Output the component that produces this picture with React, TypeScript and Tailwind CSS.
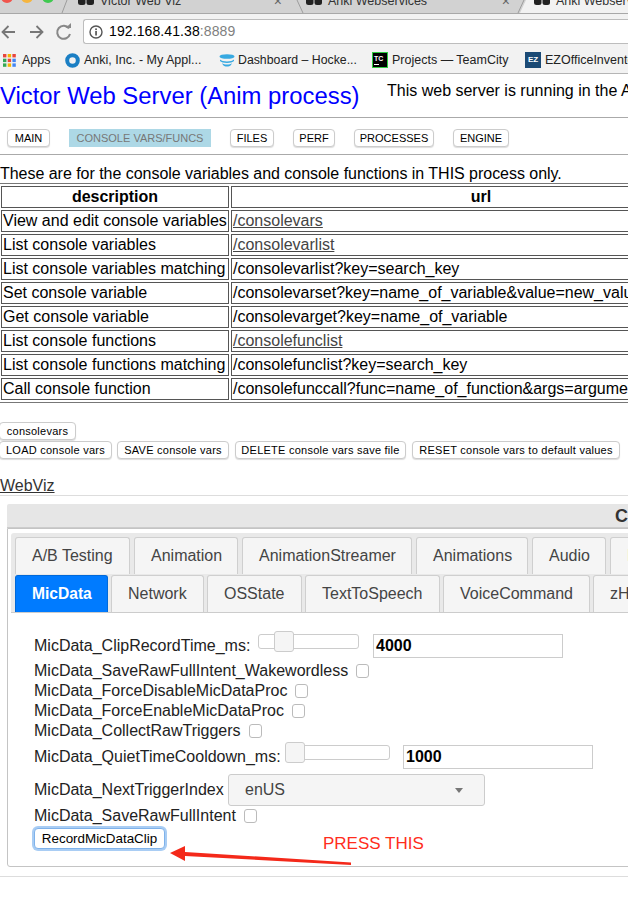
import React from "react";

const sans = "font-['Liberation_Sans',Arial,sans-serif]";

function Tab({ label, w, active }: { label: string; w: number; active?: boolean }) {
  return (
    <div
      style={{ width: w }}
      className={
        "h-[37px] shrink-0 flex items-center justify-start pl-[16px] rounded-t-[3px] border border-b-0 " +
        (active ? "bg-[#007bff] border-[#0069d9] text-white font-bold text-[15.6px]" : "bg-[#f5f5f5] border-[#cfcfcf] text-[#444] text-[16px]")
      }
    >
      {label}
    </div>
  );
}

function NavBtn({ label, w, active }: { label: string; w: number; active?: boolean }) {
  return (
    <div
      style={{ width: w }}
      className={
        "h-[18px] shrink-0 flex items-center justify-center text-[11px] " +
        (active ? "bg-[#add8e6] text-[#777]" : "bg-white text-black rounded-[4px] border border-[#ccc] shadow-[0_1px_1px_#ddd]")
      }
    >
      {label}
    </div>
  );
}

function GrayBtn({ label, w }: { label: string; w: number }) {
  return (
    <div
      style={{ width: w }}
      className="h-[18px] shrink-0 flex items-center justify-center text-[11px] tracking-[0.25px] text-black bg-white rounded-[4px] border border-[#ccc] shadow-[0_1px_1px_#ddd]"
    >
      {label}
    </div>
  );
}

function Check() {
  return <div className="ml-[8px] w-[13px] h-[14px] rounded-[3px] border border-[#bbb] bg-white shrink-0" />;
}

function Slider({ thumb, w }: { thumb: number; w: number }) {
  return (
    <div style={{ width: w }} className="relative h-[15px] rounded-[3px] border border-[#ccc] bg-white shrink-0">
      <div
        style={{ left: thumb }}
        className="absolute top-[-4px] w-[20px] h-[21px] rounded-[3px] border border-[#ccc] bg-[#f5f5f5]"
      />
    </div>
  );
}

function Fav() {
  return (
    <svg width="16" height="10" viewBox="0 0 16 10" className="shrink-0">
      <rect x="0" y="0" width="7.5" height="8" rx="2.5" fill="#222" />
      <rect x="8.5" y="0" width="7.5" height="8" rx="2.5" fill="#222" />
    </svg>
  );
}

function BrowserTab({ w, label, close }: { w: number; label: string; close?: boolean }) {
  return (
    <div style={{ width: w }} className="h-[13px] shrink-0 flex items-center pl-[16px] pr-[8px] overflow-hidden">
      <div className="flex items-center h-[13px] mt-[-10px] w-full">
        <Fav />
        <span className="ml-[6px] text-[12.5px] leading-[13px] text-[#333] whitespace-nowrap">{label}</span>
        {close && <span className="ml-auto text-[14px] leading-[13px] text-[#666]">×</span>}
      </div>
    </div>
  );
}

export default function App() {
  const rows: [string, string, boolean][] = [
    ["View and edit console variables", "/consolevars", true],
    ["List console variables", "/consolevarlist", true],
    ["List console variables matching", "/consolevarlist?key=search_key", false],
    ["Set console variable", "/consolevarset?key=name_of_variable&value=new_value", false],
    ["Get console variable", "/consolevarget?key=name_of_variable", false],
    ["List console functions", "/consolefunclist", true],
    ["List console functions matching", "/consolefunclist?key=search_key", false],
    ["Call console function", "/consolefunccall?func=name_of_function&args=arguments", false],
  ];
  return (
    <div className={"relative w-[628px] h-[904px] overflow-hidden bg-white text-black " + sans}>
      {/* tab strip */}
      <div className="relative h-[14px] bg-[#d2d2d2] border-b border-[#a8a8a8] overflow-hidden">
        <svg width="628" height="14" viewBox="0 0 628 14" className="absolute left-0 top-0">
          <circle cx="7" cy="-3" r="6" fill="#f0554d" />
          <circle cx="27" cy="-3" r="6" fill="#f5b53f" />
          <circle cx="48" cy="-3" r="6" fill="#3fc950" />
          <path d="M520 13 L526 0 L628 0 L628 14 L518 14 Z" fill="#f2f2f2" />
          <path d="M62 13 L67 0 M297 0 L303 13 M518 13 L524 0" stroke="#9c9c9c" strokeWidth="1" fill="none" />
        </svg>
        <div className="relative flex pl-[62px]">
          <BrowserTab w={228} label="Victor Web Viz" close />
          <BrowserTab w={228} label="Anki Webservices" close />
          <BrowserTab w={120} label="Anki Webserver" />
        </div>
      </div>
      {/* toolbar */}
      <div className="h-[33px] bg-[#f2f2f2] flex items-center">
        <svg width="78" height="20" viewBox="0 0 78 20" className="ml-[1px] shrink-0 mt-[2px]">
          <g stroke="#777" strokeWidth="1.8" fill="none">
            <path d="M14 10 H2 M7.5 4 L1.5 10 L7.5 16" />
            <path d="M29 10 H41 M35.5 4 L41.5 10 L35.5 16" />
            <path d="M68 6.5 A6.5 6.5 0 1 0 69 12" stroke="#888" strokeWidth="2" />
            <path d="M64.5 6 H70 V1 Z" fill="#888" stroke="none" />
          </g>
        </svg>
        <div className="ml-[4px] mt-[2px] h-[25px] flex-1 bg-white rounded-l-[3px] border border-[#bdbdbd] border-r-0 flex items-center pl-[5px]">
          <svg width="14" height="14" viewBox="0 0 14 14" className="shrink-0">
            <circle cx="7" cy="7" r="6" stroke="#555" strokeWidth="1.4" fill="none" />
            <rect x="6.2" y="6" width="1.7" height="4.5" fill="#555" />
            <rect x="6.2" y="3.4" width="1.7" height="1.7" fill="#555" />
          </svg>
          <span className="ml-[6px] text-[14px] tracking-[0.1px]">192.168.41.38<span className="text-[#808080]">:8889</span></span>
        </div>
      </div>
      {/* bookmarks */}
      <div className="h-[27px] bg-[#f2f2f2] border-b border-[#b5b5b5] flex items-center text-[12.5px] text-[#222] whitespace-nowrap overflow-hidden">
        <svg width="13" height="13" viewBox="0 0 13 13" className="ml-[3px] shrink-0">
          {[0, 1, 2].map((r) =>
            [0, 1, 2].map((c) => (
              <rect
                key={r + "-" + c}
                x={c * 4.7}
                y={r * 4.7}
                width="3.4"
                height="3.4"
                fill={["#e8453c", "#f4b400", "#e8453c", "#34a853", "#e8453c", "#4285f4", "#34a853", "#f4b400", "#4285f4"][r * 3 + c]}
              />
            ))
          )}
        </svg>
        <span className="ml-[6px] w-[43px] shrink-0">Apps</span>
        <svg width="15" height="15" viewBox="0 0 15 15" className="shrink-0">
          <circle cx="7.5" cy="7.5" r="5.3" stroke="#1b7fc4" strokeWidth="4" fill="none" />
        </svg>
        <span className="ml-[4px] w-[135px] shrink-0">Anki, Inc. - My Appl...</span>
        <svg width="16" height="13" viewBox="0 0 16 13" className="shrink-0">
          <g fill="#37a9e1">
            <ellipse cx="8" cy="2.5" rx="7.5" ry="2.3" />
            <path d="M1 5.5 C3 8 13 8 15 5.5 L15 7 C13 9.5 3 9.5 1 7 Z" />
            <path d="M3 9 C5 11 11 11 13 9 L12 11 C10 13 6 13 4 11 Z" />
          </g>
        </svg>
        <span className="ml-[3px] w-[134px] shrink-0 text-[12.3px]">Dashboard – Hocke...</span>
        <div className="w-[16px] h-[16px] shrink-0 bg-black border border-[#2ecc40] flex flex-col items-start justify-center pl-[1px]">
          <span className="text-[7px] leading-[8px] font-bold text-white">TC</span>
          <span className="w-[5px] h-px bg-white mt-[1px]" />
        </div>
        <span className="ml-[4px] w-[133px] shrink-0">Projects — TeamCity</span>
        <div className="w-[16px] h-[16px] shrink-0 bg-[#1b4a75] flex items-center justify-center text-[8px] font-bold text-white">EZ</div>
        <span className="ml-[4px]">EZOfficeInventory</span>
      </div>

      {/* heading */}
      <div className="flex h-[44px] border-b border-[#aaa] whitespace-nowrap">
        <h1 className="text-[23.85px] leading-[30px] mt-[7px] text-[#0000ff] w-[387px] shrink-0">Victor Web Server (Anim process)</h1>
        <span className="text-[16px] leading-[18px] mt-[8px]">This web server is running in the Anim process</span>
      </div>
      <div className="h-[37px] border-b border-[#aaa] flex items-start pt-[11px] pl-[7px]">
        <NavBtn label="MAIN" w={43} />
        <div className="ml-[19px]"><NavBtn label="CONSOLE VARS/FUNCS" w={142} active /></div>
        <div className="ml-[19px]"><NavBtn label="FILES" w={44} /></div>
        <div className="ml-[19px]"><NavBtn label="PERF" w={42} /></div>
        <div className="ml-[19px]"><NavBtn label="PROCESSES" w={80} /></div>
        <div className="ml-[19px]"><NavBtn label="ENGINE" w={56} /></div>
      </div>

      <p className="text-[16px] leading-[18px] mt-[10px] whitespace-nowrap tracking-[-0.03px]">These are for the console variables and console functions in THIS process only.</p>

      <table className="-ml-[2px] border border-[#777] border-separate border-spacing-[2px] text-[16px] leading-[18px] whitespace-nowrap w-[736px] table-fixed">
        <colgroup>
          <col className="w-[228px]" />
          <col className="w-[500px]" />
        </colgroup>
        <thead>
          <tr>
            <th className="border border-[#555] p-px font-bold text-center">description</th>
            <th className="border border-[#555] p-px font-bold text-center">url</th>
          </tr>
        </thead>
        <tbody>
          {rows.map((r) => (
            <tr key={r[0]}>
              <td className="border border-[#555] p-px">{r[0]}</td>
              <td className={"border border-[#555] p-px overflow-hidden " + (r[2] ? "underline text-[#444]" : "")}>{r[1]}</td>
            </tr>
          ))}
        </tbody>
      </table>

      <div className="mt-[19px] -ml-px"><GrayBtn label="consolevars" w={77} /></div>
      <div className="flex mt-px -ml-px">
        <GrayBtn label="LOAD console vars" w={113} />
        <div className="ml-[5px]"><GrayBtn label="SAVE console vars" w={112} /></div>
        <div className="ml-[6px]"><GrayBtn label="DELETE console vars save file" w={171} /></div>
        <div className="ml-[6px]"><GrayBtn label="RESET console vars to default values" w={208} /></div>
      </div>

      <div className="mt-[18px] text-[16px] leading-[18px] underline text-[#333]">WebViz</div>
      <div className="border-t border-[#ddd]" />

      {/* panel */}
      <div className="mt-[8px] ml-[7px] h-[24px] bg-[#e6e6e6] border-b border-[#ccc] text-[18px] leading-[24px] font-bold text-[#333] whitespace-nowrap pl-[608px] rounded-tl-[2px] w-[800px]">
        Console Vars
      </div>
      <div className="ml-[7px] w-[800px] h-[339px] border border-[#c4c4c4] rounded-bl-[3px] pl-[3px] pt-[4px]">
        <div className="bg-[#e9e9e9] pl-[4px] pt-[4px] rounded-t-[3px] h-[80px] border-b border-[#ccc] w-[790px]">
          <div className="flex gap-[4px]">
            <Tab label="A/B Testing" w={115} />
            <Tab label="Animation" w={104} />
            <Tab label="AnimationStreamer" w={170} />
            <Tab label="Animations" w={112} />
            <Tab label="Audio" w={74} />
            <Tab label="Basestation" w={119} />
          </div>
          <div className="flex gap-[3px] mt-px">
            <Tab label="MicData" w={93} active />
            <Tab label="Network" w={93} />
            <Tab label="OSState" w={95} />
            <Tab label="TextToSpeech" w={135} />
            <Tab label="VoiceCommand" w={147} />
            <Tab label="zHiddenForScreenshots" w={190} />
          </div>
        </div>

        <div className="pl-[23px] text-[16px] leading-[18px] text-[#222] whitespace-nowrap">
          <div className="flex items-start h-[24px] mt-[21px]">
            <span className="mt-[3px] w-[224px] shrink-0">MicData_ClipRecordTime_ms:</span>
            <Slider thumb={15} w={101} />
            <div className="ml-[14px] w-[190px] h-[24px] border border-[#ccc] pl-[2px] font-bold text-black flex items-center">4000</div>
          </div>
          <div className="flex items-center h-[20px] mt-[3px]">MicData_SaveRawFullIntent_Wakewordless<Check /></div>
          <div className="flex items-center h-[20px]">MicData_ForceDisableMicDataProc<Check /></div>
          <div className="flex items-center h-[20px]">MicData_ForceEnableMicDataProc<Check /></div>
          <div className="flex items-center h-[20px]">MicData_CollectRawTriggers<Check /></div>
          <div className="flex items-start h-[24px] mt-[4px]">
            <span className="mt-[3px] w-[251px] shrink-0">MicData_QuietTimeCooldown_ms:</span>
            <Slider thumb={-1} w={105} />
            <div className="ml-[13px] w-[190px] h-[24px] border border-[#ccc] pl-[2px] font-bold text-black flex items-center">1000</div>
          </div>
          <div className="flex items-center h-[32px] mt-[5px]">
            <span className="w-[194px] shrink-0">MicData_NextTriggerIndex</span>
            <div className="w-[257px] h-[32px] bg-[#f5f5f5] border border-[#ccc] rounded-[3px] flex items-center pl-[16px] pr-[21px] text-[#444] justify-between">
              enUS
              <span className="w-0 h-0 border-x-[4px] border-x-transparent border-t-[5px] border-t-[#777]" />
            </div>
          </div>
          <div className="flex items-center h-[20px]">MicData_SaveRawFullIntent<Check /></div>
          <div className="mt-[2px] w-[131px] h-[21px] rounded-[4px] border border-[#7fb2ea] shadow-[0_0_0_2px_#a9cdf4] bg-white text-[13.4px] text-black flex items-center justify-center">
            RecordMicDataClip
          </div>
        </div>
      </div>
      <div className="mt-[9px] border-t border-[#ddd]" />

      {/* annotation */}
      <span className="absolute left-[323px] top-[834px] text-[17px] leading-[20px] text-[#ff2d1c] whitespace-nowrap">PRESS THIS</span>
      <svg width="200" height="24" viewBox="0 0 200 24" className="absolute left-[165px] top-[845px]">
        <path d="M20 7 L186 17.5 L186 20 L20 11 Z" fill="#f4291a" />
        <path d="M5 8 L20 1 L20 16 Z" fill="#f4291a" />
      </svg>
    </div>
  );
}
